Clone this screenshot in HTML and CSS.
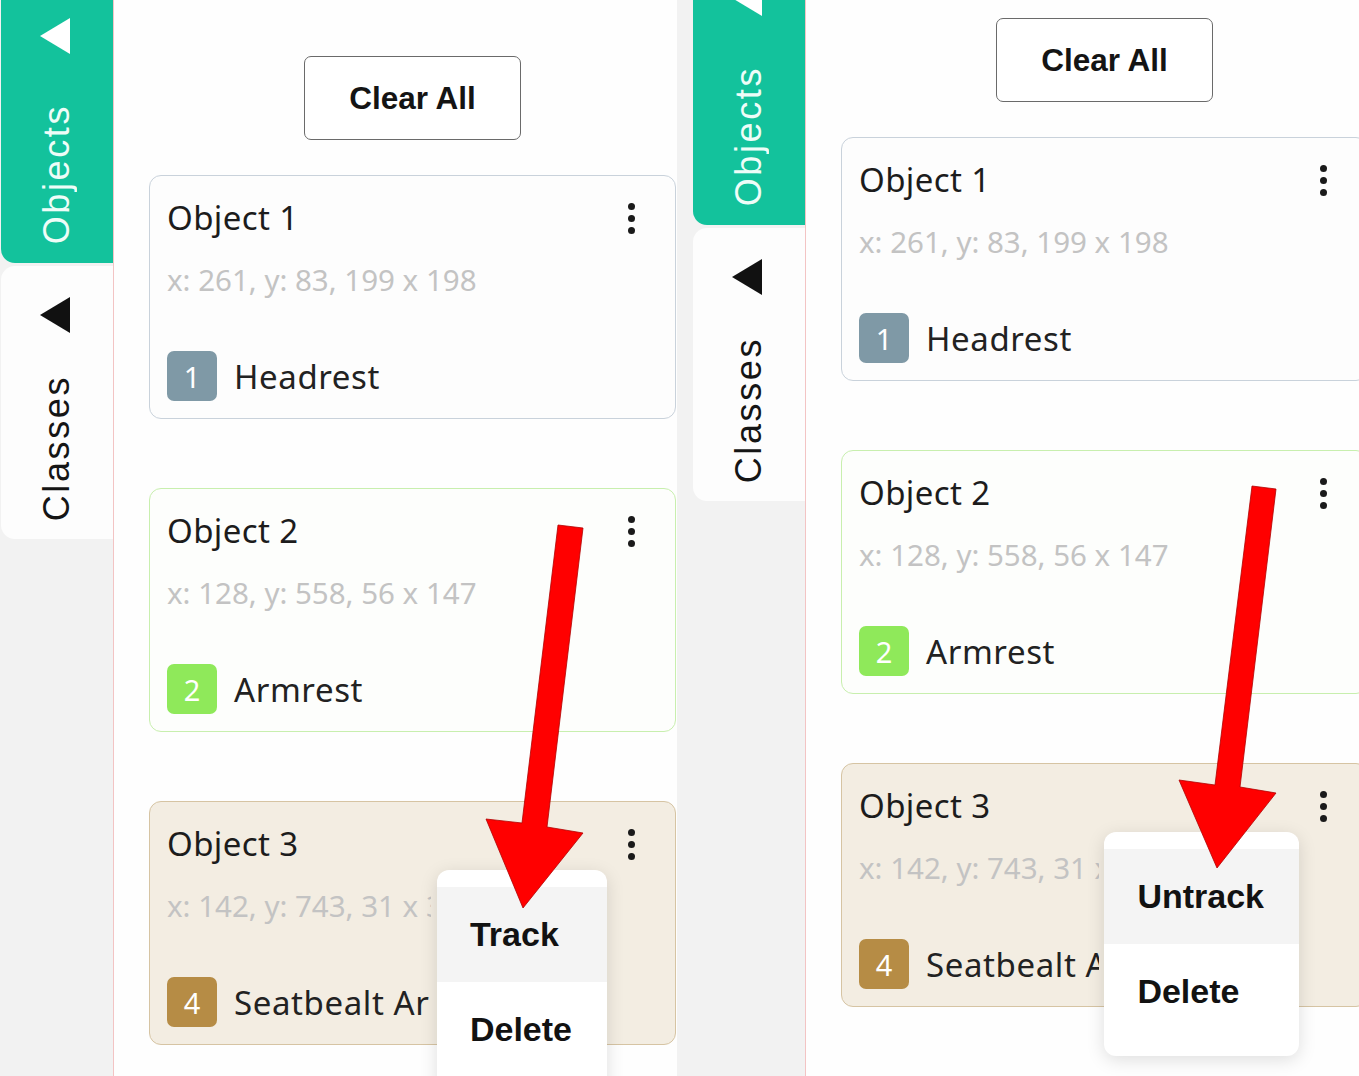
FILE: index.html
```html
<!DOCTYPE html>
<html>
<head>
<meta charset="utf-8">
<link rel="stylesheet" href="styles.css">
</head>
<body>
<div class="stage">
  <div class="shot shot-left">
    <div class="panel">
      <aside class="sidebar">
        <div class="tab tab-active tab-objects"><span class="tri"></span><span class="tab-label">Objects</span></div>
        <div class="tab tab-classes"><span class="tri"></span><span class="tab-label">Classes</span></div>
      </aside>
      <main class="content">
        <div class="column">
          <button class="clear">Clear All</button>
          <div class="cards">
            <div class="card card-blue">
              <div class="card-head"><span class="title">Object 1</span><span class="dots"><i></i><i></i><i></i></span></div>
              <div class="coords">x: 261, y: 83, 199 x 198</div>
              <div class="cls"><span class="badge badge-1">1</span><span class="label">Headrest</span></div>
            </div>
            <div class="card card-green">
              <div class="card-head"><span class="title">Object 2</span><span class="dots"><i></i><i></i><i></i></span></div>
              <div class="coords">x: 128, y: 558, 56 x 147</div>
              <div class="cls"><span class="badge badge-2">2</span><span class="label">Armrest</span></div>
            </div>
            <div class="card card-beige">
              <div class="card-head"><span class="title">Object 3</span><span class="dots"><i></i><i></i><i></i></span></div>
              <div class="coords clipped">x: 142, y: 743, 31 x 38</div>
              <div class="cls clipped"><span class="badge badge-4">4</span><span class="label">Seatbealt Armrest</span></div>
              <div class="menu">
                <div class="menu-item hover">Track</div>
                <div class="menu-item">Delete</div>
              </div>
            </div>
          </div>
        </div>
      </main>
    </div>
    <svg class="arrow" width="677" height="1076" viewBox="0 0 677 1076">
      <polygon points="558,525 583,528 547,827 583,833 523,908 486,819 522,823" fill="#ff0000" stroke="#b00000" stroke-width="0.8" stroke-linejoin="miter"/>
    </svg>
  </div>

  <div class="shot shot-right">
    <div class="panel">
      <aside class="sidebar">
        <div class="tab tab-active tab-objects"><span class="tri"></span><span class="tab-label">Objects</span></div>
        <div class="tab tab-classes"><span class="tri"></span><span class="tab-label">Classes</span></div>
      </aside>
      <main class="content">
        <div class="column">
          <button class="clear">Clear All</button>
          <div class="cards">
            <div class="card card-blue">
              <div class="card-head"><span class="title">Object 1</span><span class="dots"><i></i><i></i><i></i></span></div>
              <div class="coords">x: 261, y: 83, 199 x 198</div>
              <div class="cls"><span class="badge badge-1">1</span><span class="label">Headrest</span></div>
            </div>
            <div class="card card-green">
              <div class="card-head"><span class="title">Object 2</span><span class="dots"><i></i><i></i><i></i></span></div>
              <div class="coords">x: 128, y: 558, 56 x 147</div>
              <div class="cls"><span class="badge badge-2">2</span><span class="label">Armrest</span></div>
            </div>
            <div class="card card-beige">
              <div class="card-head"><span class="title">Object 3</span><span class="dots"><i></i><i></i><i></i></span></div>
              <div class="coords clipped">x: 142, y: 743, 31 x 38</div>
              <div class="cls clipped"><span class="badge badge-4">4</span><span class="label">Seatbealt Armrest</span></div>
              <div class="menu">
                <div class="menu-item hover">Untrack</div>
                <div class="menu-item">Delete</div>
              </div>
            </div>
          </div>
        </div>
      </main>
    </div>
    <svg class="arrow" width="682" height="1076" viewBox="0 0 682 1076">
      <polygon points="575,486 599,489 563,787 599,793 540,868 502,780 538,785" fill="#ff0000" stroke="#b00000" stroke-width="0.8" stroke-linejoin="miter"/>
    </svg>
  </div>
</div>
</body>
</html>
```

FILE: styles.css
```css
html, body {
  margin: 0;
  padding: 0;
  background: #ffffff;
}

.stage {
  display: flex;
  width: 1359px;
  height: 1076px;
  overflow: hidden;
}

.shot {
  position: relative;
  height: 1076px;
  overflow: hidden;
  flex: none;
}

.shot-left {
  width: 677px;
}

.shot-right {
  width: 682px;
}

.panel {
  display: flex;
  width: 720px;
  height: 1120px;
}

.shot-left .panel {
  margin-left: -15px;
}

.shot-right .panel {
  margin-top: -38px;
}

/* ---------- sidebar ---------- */
.sidebar {
  width: 128px;
  flex: none;
  box-sizing: border-box;
  padding-left: 16px;
  background: #f2f2f2;
  display: flex;
  flex-direction: column;
  gap: 3px;
}

.tab {
  width: 112px;
  box-sizing: border-box;
  display: flex;
  flex-direction: column;
  align-items: center;
  border-radius: 0 0 0 14px;
}

.tab-objects {
  height: 263px;
  background: #13c29c;
  padding-top: 18px;
  padding-bottom: 19px;
}

.tab-classes {
  height: 273px;
  background: #fdfdfd;
  border-radius: 14px 0 0 14px;
  padding-top: 31px;
  padding-bottom: 18px;
}

.tri {
  display: block;
  width: 0;
  height: 0;
  border-top: 18px solid transparent;
  border-bottom: 18px solid transparent;
  border-right: 30px solid #111111;
  margin-left: -4px;
}

.tab-active .tri {
  border-right-color: #ffffff;
}

.tab-label {
  margin-top: auto;
  writing-mode: vertical-rl;
  transform: rotate(180deg);
  font-family: "Liberation Sans", Arial, sans-serif;
  font-size: 36px;
  letter-spacing: 2.6px;
  line-height: 40px;
  color: #151515;
}

.tab-active .tab-label {
  color: #eefdf8;
}

/* ---------- content ---------- */
.content {
  flex: 1;
  background: #fefefe;
  border-left: 1px solid #f3c4c4;
  padding: 56px 0 0 35px;
}

.column {
  width: 527px;
  display: flex;
  flex-direction: column;
  align-items: center;
}

.clear {
  width: 217px;
  height: 84px;
  box-sizing: border-box;
  border: 1.5px solid #6a6a6a;
  border-radius: 7px;
  background: #ffffff;
  font-family: "Liberation Sans", Arial, sans-serif;
  font-weight: 700;
  font-size: 31.5px;
  color: #141414;
  padding: 0;
  margin-bottom: 35px;
}

.cards {
  width: 527px;
  display: flex;
  flex-direction: column;
  gap: 69px;
}

.card {
  position: relative;
  box-sizing: border-box;
  width: 527px;
  border: 1.5px solid #c9d2db;
  border-radius: 12px;
  background: #fdfdfd;
  padding: 22px 40px 17px 17px;
  font-family: "Noto Sans", "DejaVu Sans", sans-serif;
}

.card-green {
  border-color: #c8efae;
  background: #fdfefc;
}

.card-beige {
  border-color: #d6c4a3;
  background: #f3ede2;
}

.card-head {
  display: flex;
  justify-content: space-between;
  align-items: center;
  height: 40px;
}

.title {
  font-size: 33px;
  letter-spacing: 0.4px;
  line-height: 40px;
  color: #1c1c1c;
}

.dots {
  display: flex;
  flex-direction: column;
  gap: 5px;
}

.dots i {
  display: block;
  width: 7px;
  height: 7px;
  border-radius: 50%;
  background: #1a1a1a;
}

.coords {
  margin-top: 24px;
  font-size: 29.5px;
  line-height: 36px;
  color: #c3c3c3;
  white-space: nowrap;
}

.cls {
  margin-top: 53px;
  display: flex;
  align-items: center;
  height: 50px;
}

.shot-left .clipped {
  max-width: 264px;
  overflow: hidden;
}

.shot-right .clipped {
  max-width: 240px;
  overflow: hidden;
}

.badge {
  width: 50px;
  height: 50px;
  border-radius: 7px;
  display: flex;
  align-items: center;
  justify-content: center;
  color: #ffffff;
  font-size: 29px;
  flex: none;
}

.badge-1 { background: #7f99a6; }
.badge-2 { background: #8fe95a; }
.badge-4 { background: #b68c45; }

.label {
  margin-left: 17px;
  font-size: 33px;
  letter-spacing: 0.6px;
  color: #222222;
  white-space: nowrap;
}

/* ---------- menu ---------- */
.menu {
  position: absolute;
  top: 68px;
  right: 68px;
  background: #ffffff;
  border-radius: 12px;
  padding: 17px 0;
  box-shadow: 0 4px 18px rgba(0, 0, 0, 0.13);
  z-index: 2;
}

.menu-item {
  height: 95px;
  display: flex;
  align-items: center;
  padding: 0 35px 0 33px;
  font-family: "Liberation Sans", Arial, sans-serif;
  font-weight: 700;
  font-size: 34px;
  color: #121212;
}

.menu-item.hover {
  background: #f4f4f4;
}

/* ---------- annotation arrows ---------- */
.arrow {
  position: absolute;
  left: 0;
  top: 0;
  z-index: 5;
  pointer-events: none;
}
```
